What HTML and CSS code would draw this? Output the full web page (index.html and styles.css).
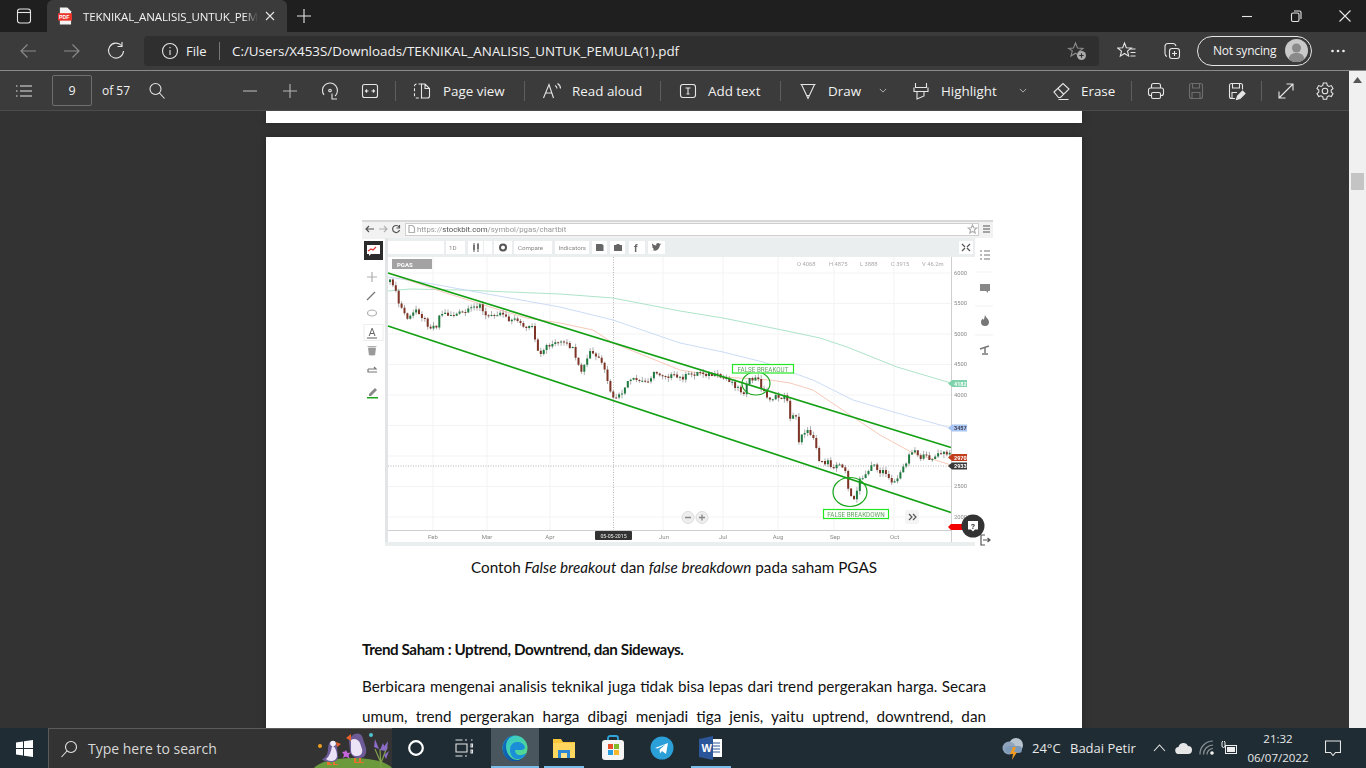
FILE: index.html
```html
<!DOCTYPE html>
<html lang="id">
<head>
    <meta charset="UTF-8">
    <meta name="viewport" content="width=device-width, initial-scale=1.0">
    <title>TEKNIKAL_ANALISIS_UNTUK_PEMULA(1).pdf</title>
    <link rel="stylesheet" href="styles.css">
</head>
<body>

<div class="tabstrip">
    <div class="tab-side"><svg width="18" height="18" viewBox="0 0 18 18" class="ic"><rect x="2.5" y="2" width="13" height="14" rx="2.5"/><path d="M2.5 5.5h13"/></svg></div>
    <div class="tab">
        <svg width="16" height="18" viewBox="0 0 16 18"><path d="M2 0h8l4 4v14H2z" fill="#f4f4f4"/><rect x="0" y="6" width="15" height="8" fill="#e8362d"/><text x="1.2" y="12.4" class="pdf-mark">PDF</text></svg>
        <span class="tab-title">TEKNIKAL_ANALISIS_UNTUK_PEM</span>
        <svg width="12" height="12" viewBox="0 0 12 12" class="ic tab-close"><path d="M2 2l8 8M10 2l-8 8"/></svg>
    </div>
    <div class="tab-new"><svg width="16" height="16" viewBox="0 0 16 16" class="ic"><path d="M8 1v14M1 8h14"/></svg></div>
    <div class="win-btns">
        <svg width="16" height="16" viewBox="0 0 16 16" class="ic"><path d="M3 8.5h10"/></svg>
        <svg width="16" height="16" viewBox="0 0 16 16" class="ic"><rect x="3.5" y="5" width="7.5" height="8.5" rx="1.5"/><path d="M6 3h5.5a1.5 1.5 0 0 1 1.5 1.5V11"/></svg>
        <svg width="16" height="16" viewBox="0 0 16 16" class="ic"><path d="M2.5 2.5l11 11M13.5 2.5l-11 11"/></svg>
    </div>
</div>

<div class="addressbar">
    <div class="nav-btn"><svg width="20" height="20" viewBox="0 0 20 20" class="ic dim"><path d="M18 10H3M9.5 3.5L3 10l6.500 6.500"/></svg></div>
    <div class="nav-btn"><svg width="20" height="20" viewBox="0 0 20 20" class="ic dim"><path d="M2 10h15M10.500 3.500L17 10l-6.500 6.500"/></svg></div>
    <div class="nav-btn"><svg width="20" height="20" viewBox="0 0 20 20" class="ic"><path d="M15.500 4.500A7.500 7.500 0 1 0 17.500 10M16 1v4.500h-4.500"/></svg></div>
    <div class="address">
        <svg width="18" height="18" viewBox="0 0 18 18" class="ic"><circle cx="9" cy="9" r="7.500"/><path d="M9 8v5M9 5v1.300"/></svg>
        <span class="addr-file">File</span>
        <span class="addr-sep"></span>
        <span class="addr-url">C:/Users/X453S/Downloads/TEKNIKAL_ANALISIS_UNTUK_PEMULA(1).pdf</span>
        <svg width="20" height="20" viewBox="0 0 20 20" class="ic dim addr-star"><path d="M8.500 2l2 5 5.500.4-4.200 3.400 1.200 4.200-4.500-2.800L4 15l1.300-5.200L1.500 7.400 6.500 7z"/><circle cx="14.500" cy="14.500" r="4.500" fill="#aaa" stroke="none"/><path d="M14.500 12.300v4.400M12.300 14.500h4.400" stroke="#2f2f2f"/></svg>
    </div>
    <div class="nav-btn fav"><svg width="20" height="20" viewBox="0 0 20 20" class="ic"><path d="M7.500 2l1.800 4.700 5 .3-3.800 3.200 1.200 4.900-4.200-2.600-4.200 2.600 1.200-4.900L.7 7l5-.3zM13.500 8h5M13.500 11.500h5M13.500 15h5"/></svg></div>
    <div class="nav-btn coll"><svg width="20" height="20" viewBox="0 0 20 20" class="ic"><rect x="7.500" y="7.500" width="10" height="10" rx="2.500"/><path d="M12.500 10v5M10 12.500h5M5 15.500c-1.500-.5-2-1.500-2-3V5.500C3 3.500 4 2.500 6 2.500h5c1.500 0 2.500.8 3 2.500"/></svg></div>
    <div class="sync-pill">
        <span>Not syncing</span>
        <svg width="23" height="23" viewBox="0 0 23 23" class="avatar"><circle cx="11.500" cy="11.500" r="11.500" fill="#c9c9c9"/><circle cx="11.500" cy="9" r="4.500" fill="#8a8a8a"/><path d="M3.500 20c1-4.500 4-6 8-6s7 1.500 8 6a11.500 11.500 0 0 1-16 0z" fill="#8a8a8a"/></svg>
    </div>
    <div class="nav-btn more"><svg width="16" height="4" viewBox="0 0 16 4" fill="#eee"><circle cx="2.500" cy="2" r="1.300"/><circle cx="8" cy="2" r="1.300"/><circle cx="13.500" cy="2" r="1.300"/></svg></div>
</div>

<div class="workspace">
    <div class="viewer">
        <div class="pdfbar">
            <div class="cell"><svg width="20" height="20" viewBox="0 0 20 20" class="ic"><path d="M6 5h12M6 10h12M6 15h12M2 5h1.500M2 10h1.500M2 15h1.500"/></svg></div>
            <div class="cell"><div class="page-input">9</div></div>
            <div class="cell cell-start"><span class="page-total">of 57</span></div>
            <div class="cell"><svg width="20" height="20" viewBox="0 0 20 20" class="ic"><circle cx="8.500" cy="8" r="5.500"/><path d="M12.500 12l5 5.500"/></svg></div>
            <div class="cell cell-end"><svg width="40" height="20" viewBox="0 0 40 20" class="ic dim2"><path d="M13 10h14"/></svg></div>
            <div class="cell"><svg width="20" height="20" viewBox="0 0 20 20" class="ic dim2"><path d="M3 10h14M10 3v14"/></svg></div>
            <div class="cell"><svg width="20" height="20" viewBox="0 0 20 20" class="ic"><path d="M4 14a7.500 7.500 0 1 1 11 1M12 12.500V18h5"/><circle cx="10" cy="9.500" r="1.300"/></svg></div>
            <div class="cell"><svg width="20" height="20" viewBox="0 0 20 20" class="ic"><rect x="2.500" y="3.500" width="15" height="13" rx="2"/><path d="M5.500 10h3M11.500 10h3M7 8.500L5.500 10 7 11.500M13 8.500l1.500 1.500-1.500 1.500"/></svg></div>
            <div class="cell"><span class="sep"></span></div>
            <div class="tool tool-pageview"><svg width="20" height="20" viewBox="0 0 20 20" class="ic"><path d="M9.500 3H4.500A2 2 0 0 0 2.500 5v10a2 2 0 0 0 2 2h5" stroke-dasharray="3 2"/><path d="M9.500 3h3.500l4.500 4.500V15a2 2 0 0 1-2 2h-6zM13 3v4.500h4.500"/></svg><span>Page view</span></div>
            <div class="cell"><span class="sep"></span></div>
            <div class="tool tool-read"><svg width="20" height="20" viewBox="0 0 20 20" class="ic"><path d="M1.500 17L7 3.500 11.500 17M3.500 12h6M13 4.500c1.500.8 2 1.800 2 3M15.500 2.500c2 1.200 3 2.800 3 5"/></svg><span>Read aloud</span></div>
            <div class="cell"><span class="sep"></span></div>
            <div class="tool tool-add"><svg width="20" height="20" viewBox="0 0 20 20" class="ic"><rect x="2.500" y="3.500" width="15" height="13" rx="2.500"/><path d="M7.500 7h5M10 7v6M8.500 13h3"/></svg><span>Add text</span></div>
            <div class="cell"><span class="sep"></span></div>
            <div class="tool tool-draw"><svg width="20" height="20" viewBox="0 0 20 20" class="ic"><path d="M2.500 3.500h15M3.500 3.500L10 17.500l6.500-14M8.500 14.500h3"/></svg><span>Draw</span></div>
            <div class="cell"><svg width="8" height="5" viewBox="0 0 10 6" class="ic thin"><path d="M1 1l4 4 4-4"/></svg></div>
            <div class="tool tool-high"><svg width="20" height="20" viewBox="0 0 20 20" class="ic"><path d="M4.500 2v4.500h11V2M3 6.500v4h14v-4M6 10.500V18l7-3v-4.500"/></svg><span>Highlight</span></div>
            <div class="cell"><svg width="8" height="5" viewBox="0 0 10 6" class="ic thin"><path d="M1 1l4 4 4-4"/></svg></div>
            <div class="tool tool-erase"><svg width="20" height="20" viewBox="0 0 20 20" class="ic"><path d="M2 11l9-8.500 6 5.500-8.500 8.500H6.500zM6 7.500l6 6M6.500 18.500h10"/></svg><span>Erase</span></div>
            <div class="cell"><span class="sep"></span></div>
            <div class="cell"><svg width="20" height="20" viewBox="0 0 20 20" class="ic"><path d="M5.500 7V4.500a2 2 0 0 1 2-2h5a2 2 0 0 1 2 2V7M5.500 14.500h-1a2 2 0 0 1-2-2V9a2 2 0 0 1 2-2h11a2 2 0 0 1 2 2v3.500a2 2 0 0 1-2 2h-1"/><rect x="5.500" y="11.500" width="9" height="6" rx="1.500"/></svg></div>
            <div class="cell"><svg width="20" height="20" viewBox="0 0 20 20" class="ic off"><path d="M3.500 4.500a2 2 0 0 1 2-2h9a2 2 0 0 1 2 2v11a2 2 0 0 1-2 2h-9a2 2 0 0 1-2-2zM6.500 2.500v4.500h7V2.500M6 17.500v-6h8v6"/></svg></div>
            <div class="cell"><svg width="20" height="20" viewBox="0 0 20 20" class="ic"><path d="M9 17.500H5.500a2 2 0 0 1-2-2v-11a2 2 0 0 1 2-2h9a2 2 0 0 1 2 2v4M6.500 2.500v4.500h7V2.500M6 17v-5.500h5"/><path d="M10.500 18.500l1-3.500 5-5 2.500 2.500-5 5z" fill="#e6e6e6"/></svg></div>
            <div class="cell"><span class="sep"></span></div>
            <div class="cell"><svg width="20" height="20" viewBox="0 0 20 20" class="ic"><path d="M3 17L17 3M10.500 3H17v6.500M3 10.500V17h6.500"/></svg></div>
            <div class="cell"><svg width="20" height="20" viewBox="0 0 20 20" class="ic"><circle cx="10" cy="10" r="2.800"/><path d="M8.300 2h3.400l.5 2.400 1.800 1 2.300-.8 1.700 3-1.800 1.500v2l1.800 1.500-1.700 3-2.300-.8-1.800 1-.5 2.400H8.300l-.5-2.400-1.800-1-2.300.8-1.700-3 1.800-1.500v-2L2 7.600l1.700-3 2.300.8 1.800-1z"/></svg></div>
        </div>

        <div class="pages">
            <div class="page page-prev"></div>
            <div class="page page-current">
                <svg class="chart" width="631" height="326" viewBox="362 220 631 326">
                    <rect x="362" y="220" width="631" height="326" fill="#fff"/>
                    <!-- browser frame of the screenshot -->
                    <rect x="362" y="220" width="631" height="19" fill="#f2f2f2"/>
                    <rect x="362" y="220" width="631" height="2" fill="#d8d8d8"/>
                    <rect x="405.500" y="223.500" width="573" height="12" fill="#fff" stroke="#cfcfcf"/>
                    <path d="M374 229h-8M369 226l-3 3 3 3" class="c-dark"/>
                    <path d="M379 229h8M384 226l3 3-3 3" class="c-light"/>
                    <path d="M399 227a3.500 3.500 0 1 0 .5 3M399.500 225v3h-3" class="c-dark"/>
                    <path d="M409 225.500h3.500l2 2v5h-5.500z" class="c-light"/>
                    <text x="417" y="232" class="url-grey">https://<tspan class="url-dark">stockbit.com</tspan>/symbol/pgas/chartbit</text>
                    <path d="M972.500 225l1.200 2.800 3 .2-2.300 2 .8 3-2.700-1.600-2.700 1.600.8-3-2.300-2 3-.2z" class="c-light"/>
                    <path d="M983 226h7M983 229h7M983 232h7" class="c-dark"/>

                    <!-- stockbit toolbar -->
                    <rect x="385" y="238" width="590" height="19" fill="#ebeeef"/>
                    <rect x="385" y="238" width="3" height="308" fill="#e2e5e6"/>
                    <rect x="385" y="542" width="590" height="4" fill="#ebeeef"/>
                    <g fill="#fff">
                        <rect x="388" y="241" width="56" height="13"/>
                        <rect x="446" y="241" width="19" height="13"/>
                        <rect x="468" y="241" width="15" height="13"/>
                        <rect x="484" y="241" width="8" height="13"/>
                        <rect x="494" y="241" width="18" height="13"/>
                        <rect x="514" y="241" width="38" height="13"/>
                        <rect x="555" y="241" width="34" height="13"/>
                        <rect x="592" y="241" width="15" height="13"/>
                        <rect x="610" y="241" width="15" height="13"/>
                        <rect x="629" y="241" width="16" height="13"/>
                        <rect x="648" y="241" width="17" height="13"/>
                        <rect x="959" y="241" width="14" height="13"/>
                    </g>
                    <text x="449" y="250" class="tb-text">1D</text>
                    <text x="518" y="250" class="tb-text">Compare</text>
                    <text x="558.500" y="250" class="tb-text">Indicators</text>
                    <path d="M474 243v9M478 243v9" class="c-mid"/>
                    <path d="M473 245h2v5h-2zM477 244h2v5h-2z" fill="#777"/>
                    <circle cx="503" cy="247.500" r="3" fill="none" stroke="#555" stroke-width="2"/>
                    <path d="M596 244h6l1.500 1.500v5.500h-7.500z" fill="#666"/>
                    <path d="M614 245h2l1-1h2l1 1h2v6h-8z" fill="#666"/>
                    <text x="634" y="252" class="tb-f">f</text>
                    <path d="M651 250c3 2 8 1 9-5l1.500-1.500-1.800.4c-1-1.500-4-.8-3.500 1.500-1.500 0-3-.8-4-2-.5 1 0 2.500 1 3l-1-.2c0 1 .5 2 1.800 2.500l-1 .1c.3.800 1 1.200 2 1.300-1 .6-2.200.8-3.500.5z" fill="#666"/>
                    <path d="M962 244l3 3M970 244l-3 3M962 251l3-3M970 251l-3-3" class="c-dark"/>
                    <!-- left drawing tools -->
                    <rect x="364" y="241" width="19" height="19" fill="#2b2b2b"/>
                    <path d="M367 245h13v9h-9l-2 2v-2h-2z" fill="#fff"/>
                    <path d="M368 251l3-2 2 1 3-3" fill="none" stroke="#d33" stroke-width="1.200"/>
                    <path d="M372 272v10M367 277h10" class="c-light"/>
                    <path d="M367 300l8-8" class="c-mid"/>
                    <path d="M368 369h8l-2-2M368 369v3h9" class="c-mid"/>
                    <ellipse cx="372" cy="313" rx="4.500" ry="3" class="c-light"/>
                    <rect x="364" y="324.500" width="19" height="16" fill="none" stroke="#eee"/>
                    <text x="372" y="336" class="tool-a">A</text>
                    <path d="M367 338h10" class="c-mid"/>
                    <path d="M368.500 348h7l-.8 7h-5.400zM367.500 346.500h9" fill="#9a9a9a" stroke="#9a9a9a" stroke-width="0.800"/>
                    <path d="M369 394l6-6 2 2-6 6h-2z" fill="#888"/>
                    <rect x="367" y="397" width="11" height="1.500" fill="#1aa51a"/>

                    <!-- right side panel -->
                    <rect x="975.500" y="238" width="17.500" height="288" fill="#fff"/>
                    <path d="M975 272h18M975 306h18M975 335h18" stroke="#f1f1f1"/>
                    <path d="M984 251h6M984 255h6M984 259h6M980 251h2M980 255h2M980 259h2" class="c-mid"/>
                    <path d="M980 284h10v7h-2v2l-2-2h-6z" fill="#888"/>
                    <path d="M985 315c1 3 4 4 4 7a4 4 0 0 1-8 0c0-2 1-2 1.500-3.500.5 1 1 1 1.500 1z" fill="#777"/>
                    <path d="M980 349l9-3M985 348v5M982 354h6" stroke="#777" stroke-width="1.500"/>
                    <path d="M985 535h-4v10h4M983 540h7M987.500 538l2.500 2-2.500 2" class="c-dark"/>

                    <!-- grid -->
                    <g class="grid">
                        <path d="M388 273h563M388 303.500h563M388 334h563M388 364.500h563M388 395h563M388 425.500h563M388 456h563M388 486.500h563M388 517h563"/>
                        <path d="M433 257v273M487 257v273M550 257v273M663 257v273M723 257v273M778 257v273M834 257v273M894 257v273"/>
                    </g>
                    <path d="M613.500 257v273M388 466h563" class="dotted"/>
                    <rect x="392" y="259" width="40" height="10" fill="#a3a3a3"/>
                    <text x="397" y="266.500" class="pgas">PGAS</text>
                    <g class="ohlc">
                        <text x="797" y="266">O 4068</text>
                        <text x="829" y="266">H 4875</text>
                        <text x="860" y="266">L 3888</text>
                        <text x="891" y="266">C 3915</text>
                        <text x="922" y="266">V 46.2m</text>
                    </g>

                    <!-- moving averages -->
                    <polyline class="ma ma-green" points="388,291 410,289 460,290 510,292 560,294 613,298 680,311 723,318 787,331 820,338 847,347 897,367 951,383"/>
                    <polyline class="ma ma-blue" points="388,277 427,283 493,295 560,307 613,320 680,343 723,352 763,362 813,380 853,400 897,413 951,428"/>
                    <polyline class="ma ma-orange" points="393,275 443,292 493,308 527,318 560,323 593,330 613,343 680,370 723,377 770,380 790,383 813,390 847,413 880,435 913,453 951,465"/>

                    <!-- candles are filled in by chart.js -->
                    <path id="wicks" class="wicks"/>
                    <path id="bodiesUp" class="body-up"/>
                    <path id="bodiesDown" class="body-down"/>

                    <!-- channel and annotations -->
                    <path d="M388 273L951 447.500M388 326L951 512.500" class="channel"/>
                    <ellipse cx="756" cy="383.500" rx="14" ry="11.500" class="ring"/>
                    <ellipse cx="850" cy="492" rx="17" ry="14.500" class="ring"/>
                    <rect x="732.500" y="364.500" width="61" height="8.500" class="note-box"/>
                    <text x="763" y="371.500" class="note-text">FALSE BREAKOUT</text>
                    <rect x="823.500" y="509.500" width="65" height="9" class="note-box"/>
                    <text x="856" y="516.800" class="note-text">FALSE BREAKDOWN</text>

                    <!-- axes -->
                    <path d="M951.500 257v285M388 530.500h563" class="axis"/>
                    <g class="y-labels">
                        <text x="954" y="275">6000</text>
                        <text x="954" y="305">5500</text>
                        <text x="954" y="336">5000</text>
                        <text x="954" y="366">4500</text>
                        <text x="954" y="397">4000</text>
                        <text x="954" y="488">2500</text>
                        <text x="954" y="519">2000</text>
                    </g>
                    <g class="x-labels">
                        <text x="433" y="538.500">Feb</text>
                        <text x="487" y="538.500">Mar</text>
                        <text x="550" y="538.500">Apr</text>
                        <text x="664" y="538.500">Jun</text>
                        <text x="723" y="538.500">Jul</text>
                        <text x="778" y="538.500">Aug</text>
                        <text x="835" y="538.500">Sep</text>
                        <text x="894.500" y="538.500">Oct</text>
                    </g>
                    <rect x="595" y="531" width="37" height="9" rx="1" fill="#333"/>
                    <text x="613.500" y="537.800" class="date-tag">05-05-2015</text>

                    <path d="M948 383.500l4-3.500h15v7h-15z" fill="#7ed3ac"/>
                    <text x="954" y="385.700" class="tag">4182</text>
                    <path d="M948 428l4-3.500h15v7h-15z" fill="#a9c5f2"/>
                    <text x="954" y="430.200" class="tag tag-dark">3457</text>
                    <path d="M948 457.500l4-3.500h15v7h-15z" fill="#c23f1e"/>
                    <text x="954" y="459.800" class="tag">2970</text>
                    <path d="M948 466l4-3.500h15v7h-15z" fill="#383838"/>
                    <text x="954" y="468.300" class="tag">2933</text>
                    <path d="M948 527l3-3h24v6h-24z" fill="#f30000"/>

                    <!-- bottom controls -->
                    <circle cx="688" cy="517.500" r="6" fill="#eee" stroke="#ddd"/>
                    <circle cx="702" cy="517.500" r="6" fill="#eee" stroke="#ddd"/>
                    <path d="M685 517.500h6M699 517.500h6M702 514.500v6" stroke="#888" stroke-width="1.300"/>
                    <rect x="905" y="510" width="14" height="14" rx="2" fill="#f4f4f4"/>
                    <path d="M909 514l3 3-3 3M913 514l3 3-3 3" class="c-dark"/>
                    <circle cx="973" cy="526" r="11.500" fill="#333"/>
                    <path d="M968 521h10v8.500h-3l-2 2-2-2h-3z" fill="#fff"/>
                    <text x="973" y="528.500" class="help">?</text>
                </svg>

                <p class="caption">Contoh <em>False breakout</em> dan <em>false breakdown</em> pada saham PGAS</p>
                <h3 class="heading">Trend Saham : Uptrend, Downtrend, dan Sideways.</h3>
                <p class="para">
                    <span class="para-line">Berbicara mengenai analisis teknikal juga tidak bisa lepas dari trend pergerakan harga. Secara</span>
                    <span class="para-line">umum, trend pergerakan harga dibagi menjadi tiga jenis, yaitu uptrend, downtrend, dan</span>
                </p>
            </div>
        </div>
    </div>
    <div class="scrollbar">
        <svg width="9" height="6" viewBox="0 0 9 6" class="scroll-up"><path d="M4.500 0L9 6H0z" fill="#555"/></svg>
        <div class="scroll-thumb"></div>
    </div>
</div>

<div class="taskbar">
    <div class="start"><svg width="17" height="17" viewBox="0 0 17 17" fill="#fff"><path d="M0 2.400L7 1.400V8H0zM8 1.300L17 0v8H8zM0 9h7v6.600L0 14.600zM8 9h9v8L8 15.700z"/></svg></div>
    <div class="search">
        <svg width="18" height="18" viewBox="0 0 18 18" class="ic"><circle cx="11" cy="7" r="5.500"/><path d="M7 11l-5.500 6"/></svg>
        <span class="search-text">Type here to search</span>
        <svg width="79" height="40" viewBox="0 0 79 40" class="puffins">
            <ellipse cx="40" cy="42" rx="40" ry="13" fill="#6b9a3c"/>
            <!-- small puffin -->
            <path d="M17 13c4-2 7 0 7 5l1 10c0 3-3 5-7 5-4 0-8-1-9-3 4-1 6-6 6-10 0-3 1-6 2-7z" fill="#6d5b98"/>
            <path d="M19 17c3 0 5 5 5 10 0 3-3 5-6 5-2 0-4-1-5-2 3-2 5-7 6-13z" fill="#ece3f6"/>
            <path d="M23 13l5 2-4 3z" fill="#e8622a"/>
            <circle cx="20" cy="14.500" r="2.800" fill="#f3eef7"/>
            <path d="M14 33h3v2h2v1h-5zM20 33h2v2h3v1h-5z" fill="#e8722a"/>
            <!-- big puffin -->
            <path d="M39 7c4-4 10-3 11 3l3 9c1 5-1 10-6 10-5 1-9-2-10-7l-1-9c0-3 1-5 3-6z" fill="#6d5b98"/>
            <path d="M38 11c3-2 7-1 9 3l2 6c1 4-1 7-5 7-4 0-6-2-6-6z" fill="#ece3f6"/>
            <path d="M38 5l-5 4 5 3z" fill="#e8622a"/>
            <path d="M41 29h2v4h3v1h-5zM46 29h2v4h3v1h-5z" fill="#e8722a"/>
            <path d="M33 21l1.500 3 3.500-.5-2.500 2.500 1 3.500-3.500-2-3 1.500 1-3.500-2-2.500 3-.5z" fill="#c866e0"/>
            <circle cx="7" cy="17" r="2" fill="#f0a020"/>
            <circle cx="58" cy="6" r="2" fill="#4fc3d0"/>
            <!-- lavender -->
            <path d="M68 40L67 20M68 34l6-16M68 34l-6-14" stroke="#7fa04a" stroke-width="1.200" fill="none"/>
            <path d="M62 10l4 10-5-2zM70 14l3 8-6-1zM75 12l-1 9-4-2zM76 22l-3 8-2-4z" fill="#8c6cc8"/>
        </svg>
    </div>
    <div class="task-btn"><svg width="20" height="20" viewBox="0 0 20 20" fill="none" stroke="#fff" stroke-width="2.200"><circle cx="10" cy="10" r="6.800"/></svg></div>
    <div class="task-btn"><svg width="20" height="20" viewBox="0 0 20 20" class="ic"><path d="M1.500 2h7M1.500 18h7M2 6h11v8H2zM11 2h2M11 18h2M17 2h1.500M17 6h1.500v3H17zM17 12h1.500v3H17z"/></svg></div>
    <div class="task-app task-edge">
        <svg width="26" height="26" viewBox="0 0 26 26">
            <defs>
                <linearGradient id="edgeTop" x1="0" y1="0" x2="1" y2="1"><stop offset="0" stop-color="#2fc7d8"/><stop offset="1" stop-color="#5fdc7d"/></linearGradient>
                <linearGradient id="edgeLow" x1="0" y1="0" x2="1" y2="1"><stop offset="0" stop-color="#1273c4"/><stop offset="1" stop-color="#0d4e9c"/></linearGradient>
            </defs>
            <circle cx="13" cy="13" r="12.500" fill="url(#edgeTop)"/>
            <path d="M.5 13C1 6 6 .5 13 .5c-6 1-9 5-9 11 0 7 5 13 11 13.500 1 0 3 0 5-1-2 2-4.500 2.500-7 2.500-7 0-12.500-6-12.500-13.500z" fill="url(#edgeLow)"/>
            <path d="M8 15c0-5 3-8 7-8 4 0 7 2 8 5 0 2-2 3-4 3h-6c0 3 2 5 5 5 2 0 4-.5 6-2-1 4-5 7-10 6-4-1-6-5-6-9z" fill="#1a8fd8"/>
        </svg>
    </div>
    <div class="task-app task-run">
        <svg width="24" height="22" viewBox="0 0 24 22"><path d="M1 2h8l2 3h12v16H1z" fill="#f7c63b"/><rect x="1" y="6" width="22" height="15" fill="#ffd75e"/><rect x="6" y="13" width="12" height="8" fill="#2d87d2"/><rect x="9" y="16" width="6" height="5" fill="#ffe28a"/></svg>
    </div>
    <div class="task-app">
        <svg width="24" height="26" viewBox="0 0 24 26"><path d="M7 6V3a2 2 0 0 1 2-2h6a2 2 0 0 1 2 2v3" fill="none" stroke="#2fa5dc" stroke-width="1.800"/><rect x="1" y="5" width="22" height="20" rx="3" fill="#f5f5f5"/><rect x="7" y="9" width="5" height="5" fill="#e8502a"/><rect x="13" y="9" width="5" height="5" fill="#7fba2a"/><rect x="7" y="15" width="5" height="5" fill="#2a9fe0"/><rect x="13" y="15" width="5" height="5" fill="#f7b92a"/></svg>
    </div>
    <div class="task-app">
        <svg width="24" height="24" viewBox="0 0 24 24"><circle cx="12" cy="12" r="11.500" fill="#2a9fd8"/><path d="M5 12l13-5-2 11-4-3-2 2.500-.5-4 6-5-8 4z" fill="#fff"/></svg>
    </div>
    <div class="task-app task-run">
        <svg width="24" height="24" viewBox="0 0 24 24"><rect x="10" y="3" width="13" height="18" fill="#fff"/><path d="M13 7h8M13 10h8M13 13h8M13 16h8" stroke="#2b579a"/><path d="M0 3l14-3v24L0 21z" fill="#2b579a"/><text x="2.500" y="15.500" class="word-mark">W</text></svg>
    </div>
    <div class="tray">
        <svg width="24" height="24" viewBox="0 0 24 24" class="tray-weather"><circle cx="15" cy="9" r="7" fill="#b8c4d0"/><circle cx="8" cy="12" r="6.500" fill="#8fa3bc"/><rect x="4" y="10" width="17" height="7" rx="3.500" fill="#7f9ab8"/><path d="M12 11l-3 7h3l-1 6 5-8h-3l2-5z" fill="#f09a20"/></svg>
        <span class="tray-temp">24°C</span>
        <span class="tray-cond">Badai Petir</span>
        <svg width="13" height="8" viewBox="0 0 13 8" class="ic tray-chev"><path d="M1 7l5.500-6L12 7"/></svg>
        <svg width="17" height="12" viewBox="0 0 17 12" class="tray-cloud"><path d="M4 12a3.500 3.500 0 0 1-.5-7A5 5 0 0 1 13 4a4 4 0 0 1 0 8z" fill="#e6e6e6"/></svg>
        <svg width="16" height="16" viewBox="0 0 16 16" class="tray-wifi"><path d="M1 14.500A13 13 0 0 1 14 1M4.500 14.500A9.500 9.500 0 0 1 14 5M8 14.500A6 6 0 0 1 14 8.500" fill="none" stroke="#8b9296" stroke-width="1.200"/><circle cx="13" cy="13" r="1.800" fill="#f2f2f2"/></svg>
        <svg width="16" height="14" viewBox="0 0 16 14" class="tray-batt"><rect x="4.500" y="4.500" width="11" height="8" fill="none" stroke="#eee"/><rect x="6" y="6" width="8" height="5" fill="#eee"/><path d="M1 1v4a1.500 1.500 0 0 0 3 0V1M1.500 1v-1M3.500 1v-1" fill="none" stroke="#eee"/></svg>
        <div class="clock"><span>21:32</span><span>06/07/2022</span></div>
        <svg width="16" height="16" viewBox="0 0 16 16" class="ic tray-note"><path d="M.5 1h15v11.500h-5l-2.500 3-2.500-3h-5z"/></svg>
    </div>
</div>

<script src="chart.js"></script>
</body>
</html>
```

FILE: styles.css
```css
* {
    box-sizing: border-box;
}
html, body {
    height: 100%;
}
body {
    margin: 0;
    width: 1366px;
    height: 768px;
    overflow: hidden;
    display: flex;
    flex-direction: column;
    font-family: "Open Sans", "Noto Sans", sans-serif;
    font-size: 13px;
    color: #f2f2f2;
    background-color: #333;
}
.ic {
    fill: none;
    stroke: #e6e6e6;
    stroke-width: 1.100;
    flex: none;
}
.ic.dim {
    stroke: #8c8c8c;
}
.ic.dim2 {
    stroke: #b5b5b5;
}
.ic.off {
    stroke: #6e6e6e;
}
.ic.thin {
    stroke: #bdbdbd;
}

/* tab strip */
.tabstrip {
    height: 32px;
    display: flex;
    flex: none;
    background-color: #1f1f1f;
}
.tab-side {
    width: 47px;
    display: flex;
    align-items: center;
    justify-content: center;
}
.tab {
    width: 240px;
    display: flex;
    align-items: center;
    padding: 0 11px;
    background-color: #3b3b3b;
    border-radius: 6px 6px 0 0;
}
.pdf-mark {
    font: bold 5.500px "Liberation Sans", sans-serif;
    fill: #fff;
}
.tab-title {
    width: 177px;
    margin-left: 10px;
    font-size: 11.500px;
    letter-spacing: -0.1px;
    white-space: nowrap;
    -webkit-mask-image: linear-gradient(to right, #000 92%, transparent);
    mask-image: linear-gradient(to right, #000 92%, transparent);
}
.tab-close {
    margin-left: 6px;
}
.tab-new {
    width: 34px;
    display: flex;
    align-items: center;
    justify-content: center;
}
.win-btns {
    margin-left: auto;
    padding-right: 13px;
    display: flex;
    align-items: center;
    gap: 33px;
}

/* address row */
.addressbar {
    height: 39px;
    flex: none;
    display: flex;
    align-items: center;
    gap: 4px;
    padding: 4px 0 5px 8px;
    background-color: #3b3b3b;
    border-bottom: 1px solid #8a8a8a;
}
.nav-btn {
    width: 40px;
    height: 30px;
    display: flex;
    align-items: center;
    justify-content: center;
}
.address {
    width: 955px;
    height: 30px;
    margin-left: 4px;
    padding: 0 12px 0 17px;
    display: flex;
    align-items: center;
    background-color: #2f2f2f;
    border-radius: 4px;
    font-size: 13.400px;
}
.addr-file {
    width: 21px;
    margin-left: 7px;
    font-size: 13px;
}
.addr-sep {
    width: 1px;
    height: 18px;
    margin: 0 12px;
    background-color: #777;
}
.addr-url {
    white-space: nowrap;
}
.addr-star {
    margin-left: auto;
}
.fav {
    margin-left: 4px;
}
.coll {
    margin-left: 1px;
}
.sync-pill {
    width: 115px;
    height: 30px;
    margin-left: 1px;
    padding: 0 3px 0 15px;
    display: flex;
    align-items: center;
    justify-content: space-between;
    border: 1px solid #e6e6e6;
    border-radius: 15px;
    font-size: 12px;
    letter-spacing: -0.2px;
    white-space: nowrap;
}
.more {
    margin-left: 2px;
}

/* pdf viewer */
.workspace {
    flex: 1;
    min-height: 0;
    display: flex;
}
.viewer {
    width: 1349px;
    display: flex;
    flex-direction: column;
    min-height: 0;
}
.pdfbar {
    height: 40px;
    flex: none;
    display: grid;
    grid-template-columns: 48px 48px 41px 40px 93px 40px 40px 40px 10px 119px 10px 126px 10px 110px 10px 85px 26px 114px 26px 90px 10px 40px 40px 40px 10px 39px 40px;
    align-items: center;
    background-color: #3b3b3b;
    border-bottom: 1px solid #4c4c4c;
    font-size: 13.400px;
    white-space: nowrap;
}
.cell {
    display: flex;
    align-items: center;
    justify-content: center;
}
.cell-start {
    justify-content: flex-start;
}
.cell-end {
    justify-content: flex-end;
}
.tool {
    display: flex;
    align-items: center;
}
.tool-pageview { padding-left: 12px; gap: 11px; }
.tool-read { padding-left: 13px; gap: 10px; }
.tool-add { padding-left: 13px; gap: 10px; }
.tool-draw { padding-left: 13px; gap: 10px; }
.tool-high { padding-left: 15px; gap: 10px; }
.tool-erase { padding-left: 16px; gap: 9px; }
.sep {
    width: 1px;
    height: 20px;
    background-color: #5e5e5e;
}
.page-input {
    width: 40px;
    height: 31px;
    display: flex;
    align-items: center;
    justify-content: center;
    border: 1px solid #6e6e6e;
    border-radius: 2px;
    font-size: 12.500px;
}
.page-total {
    margin-left: 6px;
    font-size: 12px;
}
.pages {
    flex: 1;
    min-height: 0;
    overflow: hidden;
    padding-left: 266px;
    background-color: #333;
}
.page {
    width: 816px;
    background-color: #fff;
    box-shadow: 0 0 8px rgba(0, 0, 0, 0.25);
}
.page-prev {
    height: 12px;
    margin-bottom: 14px;
}
.page-current {
    height: 900px;
    padding: 83px 96px 0;
    font-family: Lato, "Liberation Sans", sans-serif;
    color: #111;
}
.chart {
    display: block;
    filter: blur(0.35px);
}
.caption {
    margin: 11px 0 0;
    height: 20px;
    line-height: 20px;
    text-align: center;
    font-size: 15.250px;
}
.heading {
    margin: 62px 0 0;
    height: 20px;
    line-height: 20px;
    font-size: 15.200px;
    font-weight: 700;
    letter-spacing: -0.41px;
}
.para {
    width: 624px;
    margin: 12px 0 0;
    font-size: 15.250px;
    line-height: 30px;
}
.para-line {
    display: block;
    text-align: justify;
    text-align-last: justify;
}

/* chart pieces */
.c-dark, .c-mid, .c-light {
    fill: none;
    stroke-width: 1.200;
}
.c-dark { stroke: #555; }
.c-mid { stroke: #777; }
.c-light { stroke: #b0b0b0; }
.chart text {
    font-family: Roboto, "Liberation Sans", sans-serif;
}
.url-grey { font-size: 7.800px; fill: #999; }
.url-dark { fill: #555; }
.tb-text { font-size: 6.200px; fill: #888; }
.tb-f { font-size: 10px; font-weight: 700; fill: #666; }
.tool-a { font-size: 11px; fill: #666; text-anchor: middle; }
.grid path { stroke: #f3f3f3; fill: none; }
.dotted { stroke: #b5b5b5; stroke-dasharray: 1 1.500; fill: none; }
.pgas { font-size: 6px; font-weight: 700; fill: #fff; }
.ohlc text { font-size: 5.800px; fill: #aaa; }
.ma { fill: none; stroke-width: 0.900; }
.ma-green { stroke: #a5e0c3; }
.ma-blue { stroke: #c6d7f5; }
.ma-orange { stroke: #f6c3b0; }
.wicks { stroke: #777; stroke-width: 0.600; fill: none; }
.body-up { fill: #1f7a40; }
.body-down { fill: #7d3426; }
.channel { stroke: #14a014; stroke-width: 1.700; fill: none; }
.ring { fill: none; stroke: #1aa51a; stroke-width: 1.200; }
.note-box { fill: #fff; stroke: #22e822; stroke-width: 1.200; }
.note-text { font-size: 6.300px; fill: #5ea35e; text-anchor: middle; }
.axis { stroke: #cfcfcf; fill: none; }
.y-labels text { font-size: 5.800px; fill: #8a8a8a; }
.x-labels text { font-size: 6px; fill: #8a8a8a; text-anchor: middle; }
.date-tag { font-size: 5.200px; fill: #eee; text-anchor: middle; }
.tag { font-size: 5.500px; font-weight: 700; fill: #fff; }
.tag-dark { fill: #445; }
.help { font-size: 8px; font-weight: 700; fill: #333; text-anchor: middle; }

/* scrollbar */
.scrollbar {
    width: 17px;
    display: flex;
    flex-direction: column;
    align-items: center;
    background-color: #f0f0f0;
}
.scroll-up {
    margin-top: 6px;
}
.scroll-thumb {
    width: 13px;
    height: 17px;
    margin-top: 90px;
    background-color: #c4c4c4;
}

/* taskbar */
.taskbar {
    height: 40px;
    flex: none;
    display: flex;
    background-color: #1f2c33;
}
.start {
    width: 48px;
    display: flex;
    align-items: center;
    justify-content: center;
}
.search {
    width: 344px;
    padding-left: 11px;
    display: flex;
    align-items: center;
    background-color: #333;
    border: 1px solid #5b5b5b;
    border-width: 1px 0 0 1px;
    overflow: hidden;
}
.search-text {
    margin-left: 10px;
    font-size: 14px;
    color: #d8d8d8;
}
.puffins {
    margin-left: auto;
    flex: none;
}
.task-btn {
    width: 48px;
    display: flex;
    align-items: center;
    justify-content: center;
}
.task-app {
    width: 49px;
    display: flex;
    align-items: center;
    justify-content: center;
}
.task-edge {
    width: 48px;
    margin-left: 3px;
    background: linear-gradient(#79bce8, #79bce8) center bottom / 100% 2px no-repeat, #49565d;
}
.task-run {
    background: linear-gradient(#79bce8, #79bce8) center bottom / 40px 2px no-repeat;
}
.word-mark {
    font: 700 11px "Liberation Sans", sans-serif;
    fill: #fff;
}
.tray {
    margin-left: auto;
    display: flex;
    align-items: center;
    font-size: 13px;
    color: #e8e8e8;
    white-space: nowrap;
}
.tray-temp {
    margin-left: 7px;
    width: 38px;
}
.tray-cond {
    width: 73px;
}
.tray-chev {
    margin-left: 10px;
}
.tray-cloud {
    margin-left: 9px;
}
.tray-wifi {
    margin-left: 7px;
}
.tray-batt {
    margin-left: 6px;
}
.clock {
    width: 72px;
    margin-left: 5px;
    display: flex;
    flex-direction: column;
    align-items: center;
    font-size: 11.500px;
    line-height: 19px;
}
.tray-note {
    margin-left: 11px;
    margin-right: 25px;
}
```

FILE: chart.js
```js
// price path read off the chart: x, y in page pixels
const path = [
    [389,282],[393,283],[395,290],[398,302],[407,318],[410,318],[417,308],[423,318],[430,327],[437,325],
    [440,313],[453,315],[467,312],[480,303],[483,313],[488,318],[493,313],[503,313],[510,320],[520,320],
    [523,328],[533,328],[537,353],[542,352],[547,345],[560,343],[572,347],[577,365],[582,372],[590,352],
    [598,358],[605,372],[608,382],[610,393],[617,400],[628,383],[632,380],[645,382],[655,373],[680,378],
    [700,372],[730,380],[743,393],[750,380],[757,378],[762,388],[767,398],[787,397],[790,417],[796,417],
    [797,437],[798,443],[803,430],[813,435],[816,443],[818,460],[828,463],[830,470],[840,462],[845,468],
    [847,487],[851,497],[855,497],[860,480],[867,475],[873,460],[878,472],[887,473],[893,483],[900,475],
    [905,463],[913,448],[920,457],[933,458],[942,453],[950,455]
];

function priceAt(x) {
    for (let i = 1; i < path.length; i++) {
        if (x <= path[i][0]) {
            const a = path[i - 1], b = path[i];
            return a[1] + (b[1] - a[1]) * (x - a[0]) / (b[0] - a[0]);
        }
    }
    return path[path.length - 1][1];
}

function noise(i) {
    const n = Math.sin(i * 12.9898) * 43758.5453;
    return n - Math.floor(n);
}

let wicks = "", up = "", down = "";
let prev = priceAt(389);
let i = 0;
for (let x = 390; x < 950; x += 2.9) {
    const close = priceAt(x) + (noise(i) - 0.5) * 5.5;
    const top = Math.min(prev, close), bottom = Math.max(prev, close);
    const h = Math.max(bottom - top, 1);
    wicks += `M${x.toFixed(1)} ${(top - noise(i + 300) * 4).toFixed(1)}V${(bottom + noise(i + 600) * 4).toFixed(1)}`;
    const body = `M${(x - 1).toFixed(1)} ${top.toFixed(1)}h2v${h.toFixed(1)}h-2z`;
    if (close < prev) up += body; else down += body;
    prev = close;
    i++;
}

document.getElementById("wicks").setAttribute("d", wicks);
document.getElementById("bodiesUp").setAttribute("d", up);
document.getElementById("bodiesDown").setAttribute("d", down);
```
